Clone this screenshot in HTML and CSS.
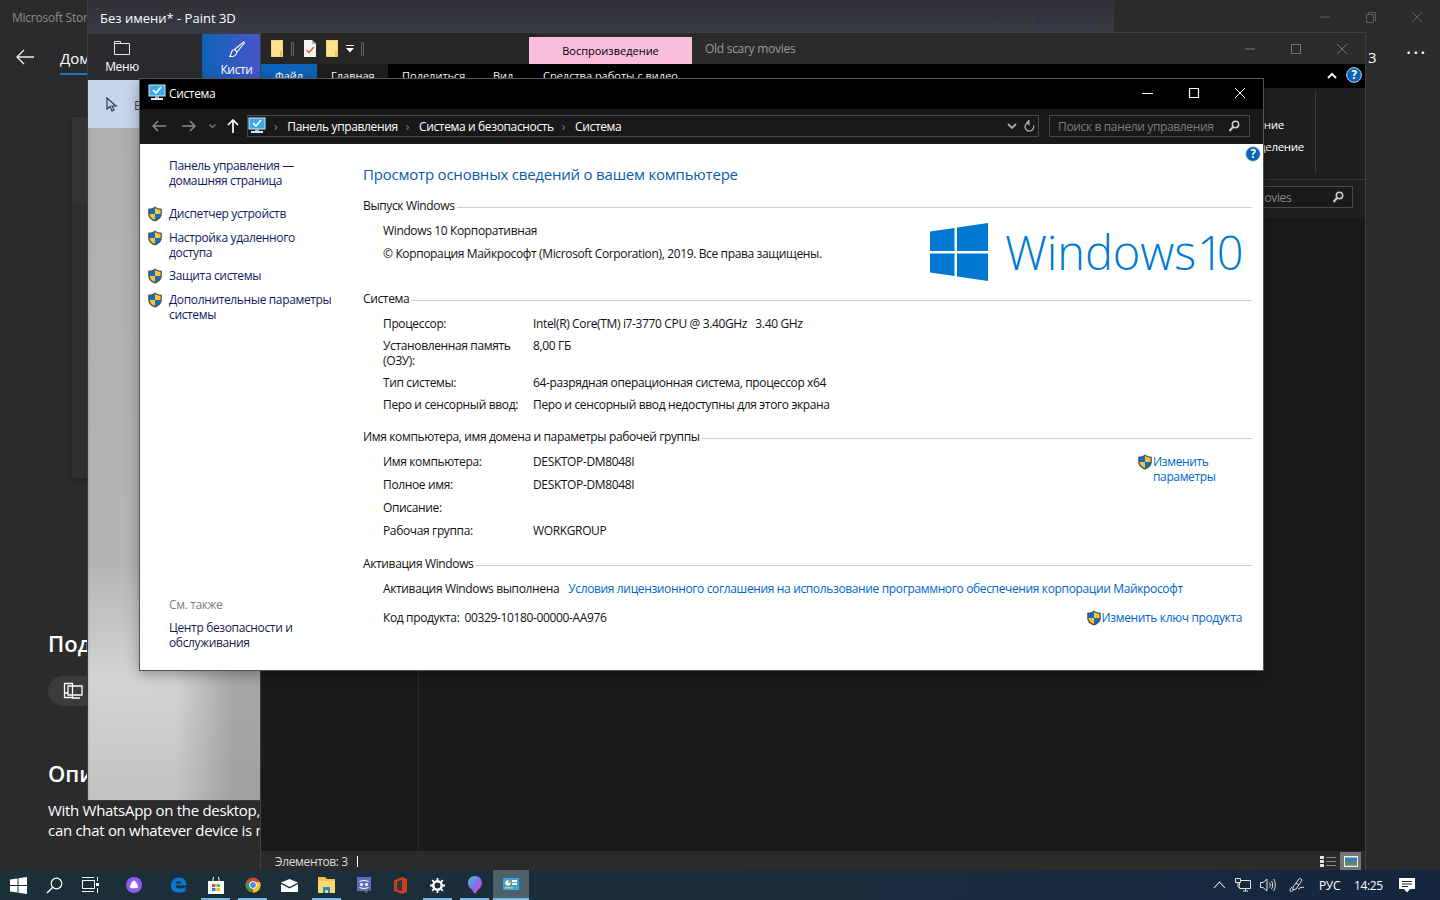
FILE: index.html
```html
<!DOCTYPE html>
<html lang="ru">
<head>
<meta charset="utf-8">
<title>Система</title>
<link rel="stylesheet" href="styles.css">
</head>
<body>
<svg class="defs" width="0" height="0">
  <symbol id="shield" viewBox="0 0 16 16">
    <path d="M8 .5C6 2 4 2.600 1.200 2.800V8c0 3.400 2.600 5.800 6.800 7.600 4.200-1.800 6.800-4.200 6.800-7.600V2.800C12 2.600 10 2 8 .5z" fill="#4f5358"/>
    <path d="M8 2C6.400 3 4.600 3.600 2.500 3.900V8H8z" fill="#0f6fc6"/>
    <path d="M8 2c1.600 1 3.400 1.600 5.500 1.900V8H8z" fill="#fdc32e"/>
    <path d="M2.500 8H8v6.100C4.800 12.700 2.500 10.800 2.500 8z" fill="#fdc32e"/>
    <path d="M13.500 8H8v6.100c3.200-1.400 5.500-3.300 5.500-6.100z" fill="#0f6fc6"/>
  </symbol>
  <symbol id="pc" viewBox="0 0 18 18">
    <rect x="1" y="1" width="16" height="11" fill="#3aa9ea" stroke="#cfe8f7" stroke-width="1"/>
    <path d="M5 6l3 3 5-6" fill="none" stroke="#fff" stroke-width="1.600"/>
    <rect x="7" y="12" width="4" height="2" fill="#9fb3c0"/>
    <rect x="3" y="14" width="12" height="2" fill="#dfe6ea"/>
  </symbol>
  <symbol id="lens" viewBox="0 0 12 12">
    <circle cx="7.500" cy="4.500" r="3.200" fill="none" stroke="currentColor" stroke-width="1.500"/>
    <path d="M5 7l-3.500 4" stroke="currentColor" stroke-width="2" fill="none"/>
  </symbol>
  <symbol id="help" viewBox="0 0 18 18">
    <circle cx="9" cy="9" r="8.300" fill="#0b63b8" stroke="#d7e6f3" stroke-width="1"/>
    <text x="9" y="14" text-anchor="middle" class="helpmark">?</text>
  </symbol>
  <symbol id="qfolder" viewBox="0 0 12 17">
    <path d="M0 0h12v17H0z" fill="#fbe28f"/>
    <path d="M9 11h3v6H9z" fill="#e7c04f"/>
    <path d="M.5 .5h11v16H.5z" fill="none" stroke="#f2d26c"/>
  </symbol>
</svg>

<div class="desktop">

  <section class="store">
    <div class="store-head">
      <div class="store-title">
        <span class="store-name">Microsoft Store</span>
        <div class="store-ctrl">
          <svg width="12" height="12" viewBox="0 0 12 12"><path d="M1 6h10" stroke="#5f5f5f"/></svg>
          <svg width="12" height="12" viewBox="0 0 12 12"><path d="M1.500 3.500h7v8h-7zM3.500 3.500v-2h7v8h-2" fill="none" stroke="#5f5f5f"/></svg>
          <svg width="12" height="12" viewBox="0 0 12 12"><path d="M1 1l10 10M11 1L1 11" stroke="#5f5f5f"/></svg>
        </div>
      </div>
      <div class="store-nav">
        <svg width="20" height="18" viewBox="0 0 20 18"><path d="M9 2L2 9l7 7M2 9h17" fill="none" stroke="#ececec" stroke-width="1.400"/></svg>
        <span class="store-home">Домой</span>
        <span class="store-count">: 3</span>
        <span class="store-more">•••</span>
      </div>
    </div>
    <div class="store-body">
      <div class="store-card"></div>
      <h2 class="store-h">Поддерживается на</h2>
      <div class="store-pill">
        <svg width="22" height="18" viewBox="0 0 22 18"><path d="M1.500 1.500h8v14h-8zM5 4h14v9H5zM9 16h8M1.500 11h4" fill="none" stroke="#fff" stroke-width="1.300"/></svg>
      </div>
      <h2 class="store-h store-h2">Описание</h2>
      <p class="store-text">With WhatsApp on the desktop, your conversations<br>can chat on whatever device is most convenient</p>
    </div>
  </section>

  <section class="paint">
    <div class="paint-title">
      <span>Без имени* - Paint 3D</span>
      <div class="paint-ctrl">
        <svg width="12" height="12" viewBox="0 0 12 12"><path d="M1 6h10" stroke="#2a2f57"/></svg>
        <svg width="12" height="12" viewBox="0 0 12 12"><path d="M1.500 .5h9v11h-9z" fill="none" stroke="#2a2f57"/></svg>
        <svg width="12" height="12" viewBox="0 0 12 12"><path d="M1 1l10 10M11 1L1 11" stroke="#2a2f57"/></svg>
      </div>
    </div>
    <div class="paint-tools">
      <div class="paint-menu">
        <svg width="18" height="14" viewBox="0 0 18 14"><path d="M1.500 2.500h15v11h-15zM1.500 2.500V.5h6v2" fill="none" stroke="#e8e8e8"/></svg>
        <span>Меню</span>
      </div>
      <div class="paint-brush">
        <svg width="16" height="17" viewBox="0 0 16 17"><path d="M14.500 1c.8 0 1 .8.500 1.500L8 11l-2.500-2.500z M5.500 8.500L8 11c-.5 2.500-2 4-4 4.500H.5c1.500-1 1.500-3 2-4.500.5-1.500 1.500-2.500 3-2.500z" fill="none" stroke="#fff" stroke-width="1.100"/></svg>
        <span>Кисти</span>
      </div>
    </div>
    <div class="paint-side">
      <svg width="14" height="16" viewBox="0 0 14 16"><path d="M2 1v11l3-2.500 2 4.500 2-1-2-4h4z" fill="#c3d4e8" stroke="#38385a" stroke-width="1.200"/></svg>
      <span class="paint-select">Выбрать</span>
    </div>
    <div class="paint-canvas"></div>
  </section>

  <section class="explorer">
    <div class="ex-title">
      <div class="ex-qa">
        <svg width="12" height="17"><use href="#qfolder"/></svg>
        <i class="ex-sep"></i>
        <svg class="ex-doc" width="12" height="17" viewBox="0 0 12 17"><path d="M0 0h8l4 4v13H0z" fill="#f3f3f3"/><path d="M8 0v4h4" fill="#b5b5b5"/><path d="M2.500 10l2.500 2.500L10 7" fill="none" stroke="#e2562a" stroke-width="1.300"/></svg>
        <svg width="12" height="17"><use href="#qfolder"/></svg>
        <svg class="ex-drop" width="8" height="8" viewBox="0 0 8 8"><path d="M0 .5h8" stroke="#fff"/><path d="M0 3h8L4 7.500z" fill="#fff"/></svg>
        <i class="ex-sep"></i>
      </div>
      <div class="ex-pink">Воспроизведение</div>
      <div class="ex-name">Old scary movies</div>
      <div class="ex-ctrl">
        <svg width="12" height="12" viewBox="0 0 12 12"><path d="M1 6h10" stroke="#777"/></svg>
        <svg width="12" height="12" viewBox="0 0 12 12"><path d="M1.500 1.500h9v9h-9z" fill="none" stroke="#777"/></svg>
        <svg width="12" height="12" viewBox="0 0 12 12"><path d="M1 1l10 10M11 1L1 11" stroke="#777"/></svg>
      </div>
    </div>
    <div class="ex-tabs">
      <span class="ex-tab ex-file">Файл</span>
      <span class="ex-tab ex-main">Главная</span>
      <span class="ex-tab ex-share">Поделиться</span>
      <span class="ex-tab ex-view">Вид</span>
      <span class="ex-tab ex-video">Средства работы с видео</span>
      <svg class="ex-up" width="10" height="7" viewBox="0 0 10 7"><path d="M1 6l4-4 4 4" fill="none" stroke="#eee" stroke-width="2"/></svg>
      <svg class="ex-help" width="16" height="16"><use href="#help"/></svg>
    </div>
    <div class="ex-ribbon">
      <div class="ex-group">
        <span>Снять выделение</span>
        <span>Обратить выделение</span>
      </div>
      <i class="ex-vline"></i>
    </div>
    <div class="ex-addr">
      <div class="ex-search">
        <span>Поиск: Old scary movies</span>
        <svg width="12" height="12"><use href="#lens"/></svg>
      </div>
    </div>
    <div class="ex-main-area">
      <div class="ex-nav"></div>
      <div class="ex-list"></div>
    </div>
    <div class="ex-status">
      <span>Элементов: 3</span>
      <i class="ex-caret"></i>
      <div class="ex-views">
        <svg width="18" height="13" viewBox="0 0 18 13"><path d="M1 1h4v3H1zM1 5h4v3H1zM1 9h4v3H1z" fill="#e4e4e4"/><path d="M7 2.500h10M7 6.500h10M7 10.500h10" stroke="#8a8a8a"/></svg>
        <span class="ex-viewon"><svg width="14" height="11" viewBox="0 0 14 11"><rect width="14" height="11" fill="#eee"/><rect x="1" y="1.500" width="12" height="8" fill="#3a7fb0"/><rect x="1" y="6" width="12" height="3.500" fill="#5f8a6a"/></svg></span>
      </div>
    </div>
  </section>

  <section class="sys">
    <header class="sys-title">
      <svg width="18" height="18"><use href="#pc"/></svg>
      <span>Система</span>
      <div class="sys-ctrl">
        <svg width="12" height="12" viewBox="0 0 12 12"><path d="M0 6.500h11" stroke="#fff"/></svg>
        <svg width="12" height="12" viewBox="0 0 12 12"><path d="M1.500 1.500h9v9h-9z" fill="none" stroke="#fff" stroke-width="1.200"/></svg>
        <svg width="12" height="12" viewBox="0 0 12 12"><path d="M1 1l10 10M11 1L1 11" stroke="#fff"/></svg>
      </div>
    </header>
    <div class="sys-addr">
      <div class="sys-nav">
        <svg width="14" height="12" viewBox="0 0 14 12"><path d="M6 1L1 6l5 5M1 6h13" fill="none" stroke="#8a8a8a" stroke-width="1.500"/></svg>
        <svg width="14" height="12" viewBox="0 0 14 12"><path d="M8 1l5 5-5 5M13 6H0" fill="none" stroke="#8a8a8a" stroke-width="1.500"/></svg>
        <svg width="7" height="5" viewBox="0 0 7 5"><path d="M.5 .5l3 3 3-3" fill="none" stroke="#777" stroke-width="1.300"/></svg>
        <svg width="12" height="14" viewBox="0 0 12 14"><path d="M1 6l5-5 5 5M6 1v13" fill="none" stroke="#fff" stroke-width="1.700"/></svg>
      </div>
      <div class="sys-path">
        <svg class="path-pc" width="18" height="18"><use href="#pc"/></svg>
        <span class="crumb-sep">›</span><span>Панель управления</span>
        <span class="crumb-sep">›</span><span>Система и безопасность</span>
        <span class="crumb-sep">›</span><span>Система</span>
        <svg class="path-drop" width="10" height="7" viewBox="0 0 10 7"><path d="M1 1l4 4 4-4" fill="none" stroke="#aaa" stroke-width="1.800"/></svg>
        <svg width="11" height="13" viewBox="0 0 11 13"><path d="M5 2.500a4.300 4.300 0 1 0 4.500 3M5 .5v4l-2-2z" fill="none" stroke="#aaa" stroke-width="1.300"/></svg>
      </div>
      <div class="sys-search">
        <span>Поиск в панели управления</span>
        <svg width="12" height="12"><use href="#lens"/></svg>
      </div>
    </div>
    <div class="sys-body">
      <svg class="sys-help" width="16" height="16"><use href="#help"/></svg>
      <aside class="side">
        <a class="side-home">Панель управления —<br>домашняя страница</a>
        <ul class="side-list">
          <li><svg width="16" height="16"><use href="#shield"/></svg><a>Диспетчер устройств</a></li>
          <li><svg width="16" height="16"><use href="#shield"/></svg><a>Настройка удаленного<br>доступа</a></li>
          <li><svg width="16" height="16"><use href="#shield"/></svg><a>Защита системы</a></li>
          <li><svg width="16" height="16"><use href="#shield"/></svg><a>Дополнительные параметры<br>системы</a></li>
        </ul>
        <div class="side-also">
          <span class="side-also-h">См. также</span>
          <a>Центр безопасности и<br>обслуживания</a>
        </div>
      </aside>
      <main class="info">
        <h1 class="info-h">Просмотр основных сведений о вашем компьютере</h1>

        <h2 class="sec"><span>Выпуск Windows</span></h2>
        <div class="edition">
          <div class="edition-text">
            <p>Windows 10 Корпоративная</p>
            <p>© Корпорация Майкрософт (Microsoft Corporation), 2019. Все права защищены.</p>
          </div>
          <div class="logo">
            <svg width="58" height="58" viewBox="0 0 58 58"><path d="M0 8.500L24.500 5v23H0zM27 4.600L58 0v28H27zM0 30.500h24.500V53L0 49.500zM27 30.500h31V58l-31-4.600z" fill="#0078d4"/></svg>
            <span class="logo-word">Windows</span><span class="logo-ten">10</span>
          </div>
        </div>

        <h2 class="sec sec-sys"><span>Система</span></h2>
        <dl class="rows rows-sys">
          <dt>Процессор:</dt><dd>Intel(R) Core(TM) i7-3770 CPU @ 3.40GHz   3.40 GHz</dd>
          <dt>Установленная память (ОЗУ):</dt><dd>8,00 ГБ</dd>
          <dt>Тип системы:</dt><dd>64-разрядная операционная система, процессор x64</dd>
          <dt>Перо и сенсорный ввод:</dt><dd>Перо и сенсорный ввод недоступны для этого экрана</dd>
        </dl>

        <h2 class="sec sec-name"><span>Имя компьютера, имя домена и параметры рабочей группы</span></h2>
        <div class="names">
          <dl class="rows rows-name">
            <dt>Имя компьютера:</dt><dd>DESKTOP-DM8048I</dd>
            <dt>Полное имя:</dt><dd>DESKTOP-DM8048I</dd>
            <dt>Описание:</dt><dd></dd>
            <dt>Рабочая группа:</dt><dd>WORKGROUP</dd>
          </dl>
          <a class="change"><svg width="16" height="16"><use href="#shield"/></svg><span>Изменить<br>параметры</span></a>
        </div>

        <h2 class="sec sec-act"><span>Активация Windows</span></h2>
        <div class="activ">
          <span>Активация Windows выполнена</span>
          <a>Условия лицензионного соглашения на использование программного обеспечения корпорации Майкрософт</a>
        </div>
        <div class="key">
          <span>Код продукта:</span>
          <span>00329-10180-00000-AA976</span>
          <a class="change change-key"><svg width="16" height="16"><use href="#shield"/></svg><span>Изменить ключ продукта</span></a>
        </div>
      </main>
    </div>
  </section>
</div>

<footer class="taskbar">
  <div class="tb-cell"><svg width="17" height="17" viewBox="0 0 17 17"><path d="M0 2.500L7.500 1.400V8H0zM8.500 1.300L17 0v8H8.500zM0 9h7.500v6.600L0 14.500zM8.500 9H17v8l-8.500-1.300z" fill="#fff"/></svg></div>
  <div class="tb-cell"><svg width="17" height="17" viewBox="0 0 17 17"><circle cx="10.500" cy="6.500" r="5.300" fill="none" stroke="#fff" stroke-width="1.200"/><path d="M6.500 10.500L1 16" stroke="#fff" stroke-width="1.400"/></svg></div>
  <div class="tb-cell"><svg width="17" height="16" viewBox="0 0 17 16"><path d="M.5 3.500h12v8H.5zM0 .5h12M0 14.500h12" fill="none" stroke="#fff"/><path d="M14 6h3v3h-3z" fill="#fff"/><path d="M15.500 0v4M15.500 11v5" stroke="#fff"/></svg></div>
  <div class="tb-cell tb-alice"><svg width="16" height="16" viewBox="0 0 16 16"><circle cx="8" cy="8" r="8" fill="#8c5cf0"/><path d="M8 3.500c1.500 0 4 4.500 4 6.500 0 1.500-2.500 1.300-4 1.300S4 11.500 4 10c0-2 2.500-6.500 4-6.500z" fill="#fff"/></svg></div>
  <div class="tb-cell"><svg width="17" height="17" viewBox="0 0 17 17"><path d="M1 9c0-5 3-8.500 8-8.500 4.500 0 7.500 3 7.500 8H5.500c.3 3.500 5.500 4 10 1.500v4.300c-6 2.700-14.500 1.500-14.500-5.300zM5.500 6.500h6c0-3-5.500-3-6 0z" fill="#0a78d4"/></svg></div>
  <div class="tb-cell tb-run"><svg width="16" height="17" viewBox="0 0 16 17"><path d="M0 4h16v13H0z" fill="#fff"/><path d="M5 4V2a3 3 0 0 1 6 0v2" fill="none" stroke="#fff"/><path d="M4 7h3.500v3H4z" fill="#e74c1e"/><path d="M8.500 7H12v3H8.500z" fill="#6cb33f"/><path d="M4 11h3.500v3H4z" fill="#1a8ad4"/><path d="M8.500 11H12v3H8.500z" fill="#f5b51d"/></svg></div>
  <div class="tb-cell tb-run"><svg width="16" height="16" viewBox="0 0 16 16"><circle cx="8" cy="8" r="7.500" fill="#d9412f"/><path d="M8 8L1.500 4.300A7.500 7.500 0 0 0 6 15.200z" fill="#3a9a49"/><path d="M8 8v7.500A7.500 7.500 0 0 0 15 5H8z" fill="#f3c22c"/><circle cx="8" cy="8" r="3.500" fill="#4a8ff0" stroke="#fff"/></svg></div>
  <div class="tb-cell"><svg width="17" height="13" viewBox="0 0 17 13"><path d="M0 3.500L8.500 0 17 3.500 8.500 8z" fill="#fff"/><path d="M0 5l8.500 4.500L17 5v8H0z" fill="#fff"/></svg></div>
  <div class="tb-cell tb-run"><svg width="17" height="16" viewBox="0 0 17 16"><path d="M0 0h7l2 2h8v3H0z" fill="#f5c542"/><path d="M0 4h17v12H0z" fill="#f7d76e"/><path d="M5 10h7v6h-2v-3H7v3H5z" fill="#1f86d0"/></svg></div>
  <div class="tb-cell"><svg width="16" height="17" viewBox="0 0 16 17"><path d="M1 0h14v14l-3-1-1 3-3-2H1z" fill="#5f6fb5"/><circle cx="5.500" cy="7.500" r="1.500" fill="#fff"/><circle cx="10.500" cy="7.500" r="1.500" fill="#fff"/><path d="M3.500 4.500c3-1.300 6-1.300 9 0M3.500 10.500c3 1.300 6 1.300 9 0" fill="none" stroke="#fff"/></svg></div>
  <div class="tb-cell"><svg width="13" height="17" viewBox="0 0 13 17"><path d="M0 3.500L8 0l5 2v13l-5 2-8-3z" fill="#d13a1e"/><path d="M3 4.500L8 3v11l-5-1z" fill="#2a3a42"/></svg></div>
  <div class="tb-cell tb-run"><svg width="15" height="15" viewBox="0 0 15 15"><circle cx="7.500" cy="7.500" r="4.200" fill="none" stroke="#fff" stroke-width="2.400"/><path d="M7.500 0v3M7.500 12v3M0 7.500h3M12 7.500h3M2.200 2.200l2.100 2.100M10.700 10.700l2.100 2.100M2.200 12.800l2.100-2.100M10.700 4.300l2.100-2.100" stroke="#fff" stroke-width="1.800"/></svg></div>
  <div class="tb-cell tb-run"><svg width="14" height="18" viewBox="0 0 14 18"><defs><linearGradient id="drop" x1="0" y1="0" x2="1" y2="1"><stop offset="0" stop-color="#3ad0d8"/><stop offset=".5" stop-color="#8a6cf0"/><stop offset="1" stop-color="#f04fa8"/></linearGradient></defs><path d="M7 0c4 0 7 3 7 7 0 3-2 5-4 7l-3 4-3-4c-2-2-4-4-4-7 0-4 3-7 7-7z" fill="url(#drop)"/></svg></div>
  <div class="tb-cell tb-active"><svg width="16" height="14" viewBox="0 0 16 14"><rect width="16" height="12" fill="#35a4e6"/><circle cx="5" cy="5" r="2.700" fill="#fff"/><path d="M5 5V2.300A2.700 2.700 0 0 1 7.700 5z" fill="#f59b23"/><rect x="9" y="2" width="5" height="2" fill="#fff"/><rect x="9" y="5" width="5" height="2" fill="#fff"/><rect x="2" y="9" width="8" height="1.500" fill="#f5c542"/></svg></div>
  <div class="tray">
    <svg class="tray-ic" width="13" height="8" viewBox="0 0 13 8"><path d="M1 7l5.500-6L12 7" fill="none" stroke="#e4e4e4" stroke-width="1.100"/></svg>
    <svg class="tray-ic" width="16" height="14" viewBox="0 0 16 14"><path d="M4.500 2.500h11v8h-11zM8 13h5M10.500 10.500V13" fill="none" stroke="#e4e4e4"/><path d="M.5 .5h5v4h-5zM3 4.500V9h2" fill="#1b2d3c" stroke="#e4e4e4"/></svg>
    <svg class="tray-ic tray-vol" width="16" height="14" viewBox="0 0 16 14"><path d="M.5 4.500h2.500L7 1v12L3 9.500H.5zM9.500 4.500c1 1.500 1 3.500 0 5M11.500 3c1.600 2.400 1.600 5.600 0 8M13.500 1c2.400 3.600 2.400 8.400 0 12" fill="none" stroke="#e4e4e4"/></svg>
    <svg class="tray-ic tray-pen" width="16" height="16" viewBox="0 0 16 16"><path d="M4 10l6-8c1-1.300 3.500.3 2.500 2L7 12l-3 1zM7 6l3 2M4.500 13C3 14 1.500 15 1 14c-.5-1 1-3 2-4M9 12c2-1 4-2.500 6-1.500" fill="none" stroke="#e4e4e4"/></svg>
    <span class="tray-lang">РУС</span>
    <span class="tray-time">14:25</span>
    <svg class="tray-note" width="16" height="15" viewBox="0 0 16 15"><path d="M0 0h16v11h-5l-3 3.500L5 11H0z" fill="#fff"/><path d="M3 3.500h10M3 6h10M3 8.500h6" stroke="#1a2b40"/></svg>
  </div>
</footer>
</body>
</html>
```
FILE: styles.css
```css
* { box-sizing: border-box; }
html, body { margin: 0; padding: 0; }
body {
  width: 1440px;
  height: 900px;
  overflow: hidden;
  background: #2b2b2b;
  font-family: "Open Sans", "Noto Sans", sans-serif;
  font-size: 12px;
  letter-spacing: -.36px;
  color: #000;
}
.defs { position: absolute; }
.helpmark { font: 700 13px "Open Sans", sans-serif; fill: #fff; }
svg { display: block; flex: none; }
a { color: inherit; }
p, h1, h2, dl, dd, dt, ul { margin: 0; padding: 0; }
li { list-style: none; }

.desktop { position: relative; width: 1440px; height: 870px; overflow: hidden; }

/* Store window */
.store { position: absolute; left: 0; top: 0; width: 1440px; height: 870px; background: #2b2b2b; color: #fff; }
.store-head { height: 80px; background: #2b2b2b; }
.store-title { display: flex; align-items: center; height: 34px; padding-left: 12px; }
.store-name { color: #8d8d8d; letter-spacing: -.25px; }
.store-ctrl { display: flex; gap: 34px; margin-left: auto; padding-right: 17px; }
.store-nav { display: flex; align-items: center; height: 46px; padding: 0 12px 0 15px; }
.store-home { margin-left: 25px; font-size: 15px; letter-spacing: 0; border-bottom: 2px solid #0f78d4; padding: 4px 0 5px; margin-top: 4px; }
.store-count { margin-left: auto; margin-right: 30px; font-size: 15px; letter-spacing: 0; }
.store-more { font-size: 11px; letter-spacing: 3px; margin-top: -9px; }
.store-body { position: relative; padding: 548px 0 0 48px; }
.store-card { position: absolute; left: 72px; top: 37px; width: 60px; height: 361px; background: linear-gradient(#333 0, #333 85px, #2f2f2f 85px); box-shadow: 0 3px 10px rgba(0,0,0,.25); }
.store-h { position: relative; font-size: 22px; font-weight: 600; letter-spacing: 0; line-height: 30px; }
.store-pill { display: flex; align-items: center; width: 120px; height: 30px; margin-top: 18px; padding-left: 15px; border-radius: 15px; background: #3b3b3b; }
.store-h2 { margin-top: 52px; }
.store-text { margin: 12px 0 0; font-size: 15px; letter-spacing: -.3px; line-height: 20px; white-space: nowrap; }

/* Paint 3D window */
.paint { position: absolute; left: 88px; top: 0; width: 1025px; height: 800px; background: #33363f; color: #fff; box-shadow: 0 0 0 1px #3a3a3a; }
.paint-title { display: flex; align-items: center; height: 33px; padding: 2px 18px 0 12px; font-size: 13px; letter-spacing: 0; background: linear-gradient(#2f3136, #383b45); }
.paint-ctrl { display: flex; gap: 34px; margin-left: auto; }
.paint-tools { display: flex; height: 47px; background: #2b2b2f; border-top: 1px solid #3b3b3b; }
.paint-menu { display: flex; flex-direction: column; align-items: center; gap: 3px; width: 68px; padding-top: 7px; }
.paint-brush { display: flex; flex-direction: column; align-items: center; gap: 3px; width: 59px; margin-left: 46px; padding: 7px 0 0 10px; background: linear-gradient(90deg, #0e63b6, #4a55c8); }
.paint-side { display: flex; gap: 15px; height: 48px; width: 173px; padding: 17px 0 0 17px; background: #c5d6ea; color: #38385a; }
.paint-select { font-size: 12px; letter-spacing: 0; }
.paint-canvas {
  width: 173px;
  height: 672px;
  background:
    linear-gradient(90deg, rgba(0,0,0,.08) 0, transparent 3px, transparent 50%, rgba(130,130,130,.55) 85%),
    linear-gradient(#aeb0ae 0, #b4b6b4 65%, #d3d5d2 82%, #c2c4c2 100%);
}

/* Explorer window */
.explorer { position: absolute; left: 261px; top: 33px; width: 1104px; height: 837px; display: flex; flex-direction: column; background: #1a1a1a; color: #fff; box-shadow: 0 0 0 1px #3f3f3f; }
.ex-title { display: flex; align-items: center; height: 31px; background: linear-gradient(90deg, #262626 0, #262626 25%, #2b2b2b 25%); }
.ex-qa { display: flex; align-items: center; width: 268px; padding-left: 10px; }
.ex-sep { display: block; width: 3px; height: 14px; margin: 0 10px 0 8px; border: 1px solid #666; border-radius: 1px; }
.ex-doc { margin-right: 10px; }
.ex-drop { margin-left: 8px; margin-right: -1px; }
.ex-pink { display: flex; align-items: center; justify-content: center; align-self: flex-end; width: 163px; height: 27px; color: #000; background: #f9bed9; font-size: 11px; letter-spacing: 0; }
.ex-name { margin-left: 13px; color: #9a9a9a; letter-spacing: -.28px; }
.ex-ctrl { display: flex; gap: 34px; margin-left: auto; padding-right: 17px; }
.ex-tabs { display: flex; align-items: flex-start; flex: none; height: 24px; background: #000; }
.ex-tab { height: 24px; padding-top: 4px; font-size: 11px; letter-spacing: 0; }
.ex-file { width: 56px; text-align: center; background: #0e62b8; }
.ex-main { width: 71px; padding-left: 14px; background: #1f1f1f; }
.ex-share { width: 105px; padding-left: 14px; }
.ex-view { width: 50px; }
.ex-video { width: 200px; }
.ex-up { margin: 8px 9px 0 auto; }
.ex-help { margin: 3px 3px 0 0; }
.ex-ribbon { display: flex; justify-content: flex-end; height: 92px; background: #1f1f1f; padding: 2px 49px 5px 0; gap: 11px; border-bottom: 1px solid #333; }
.ex-group { display: flex; flex-direction: column; align-items: flex-start; gap: 7px; padding-top: 27px; font-size: 11.500px; letter-spacing: -.3px; }
.ex-vline { display: block; width: 1px; background: #3a3a3a; }
.ex-addr { display: flex; justify-content: flex-end; align-items: flex-start; height: 38px; background: #1f1f1f; padding: 6px 12px 0 0; }
.ex-search { display: flex; align-items: center; justify-content: space-between; width: 200px; height: 22px; padding: 0 8px 0 9px; color: #8a8a8a; border: 1px solid #4a4a4a; background: #1a1a1a; }
.ex-search svg { color: #cfcfcf; }
.ex-main-area { display: flex; flex: 1; background: #1a1a1a; }
.ex-nav { width: 158px; border-right: 1px solid #2b2b2b; }
.ex-status { display: flex; align-items: center; height: 19px; padding: 1px 0 0 14px; background: #2b2b2b; color: #ddd; }
.ex-caret { display: block; width: 1px; height: 11px; margin-left: 9px; background: #fff; }
.ex-views { display: flex; align-items: center; gap: 3px; margin-left: auto; padding-right: 4px; }
.ex-viewon { display: flex; align-items: center; justify-content: center; width: 21px; height: 19px; background: #777; }

/* System window */
.sys { position: absolute; left: 140px; top: 79px; width: 1123px; height: 591px; display: flex; flex-direction: column; background: #fff; box-shadow: 0 0 0 1px #555, 0 4px 14px rgba(0,0,0,.35); }
.sys-title { display: flex; align-items: center; gap: 3px; flex: none; height: 30px; padding: 0 0 2px 8px; background: #000; color: #fff; }
.sys-ctrl { display: flex; gap: 34px; margin-left: auto; padding-right: 17px; }
.sys-addr { display: flex; align-items: center; flex: none; height: 35px; padding-bottom: 1px; background: #191919; color: #fff; }
.sys-nav { display: flex; align-items: center; width: 107px; padding-left: 12px; }
.sys-nav svg:nth-child(2) { margin-left: 16px; }
.sys-nav svg:nth-child(3) { margin-left: 13px; }
.sys-nav svg:nth-child(4) { margin-left: 11px; }
.sys-path { display: flex; align-items: center; gap: 6px; width: 792px; height: 22px; padding: 0 3px 0 1px; border: 1px solid #4a4a4a; }
.path-pc { margin-left: -1px; }
.crumb-sep { color: #888; margin: 0 4px 0 2px; }
.path-drop { margin-left: auto; margin-right: 1px; }
.sys-search { display: flex; align-items: center; justify-content: space-between; width: 201px; height: 22px; margin-left: 10px; padding: 0 9px 0 8px; border: 1px solid #4a4a4a; color: #7d7d7d; }
.sys-search svg { color: #cfcfcf; }
.sys-body { position: relative; display: flex; flex: 1; min-height: 0; }
.sys-help { position: absolute; right: 2px; top: 2px; }

.side { display: flex; flex-direction: column; width: 223px; padding: 14px 0 0 29px; color: #0d1a63; line-height: 15px; }
.side-list { display: flex; flex-direction: column; gap: 8px; margin: 18px 0 0 -22px; }
.side-list li { display: flex; gap: 6px; }
.side-also { display: flex; flex-direction: column; gap: 8px; margin-top: auto; padding-bottom: 20px; color: #111a4f; }
.side-also-h { color: #7d7d7d; }

.info { flex: 1; min-width: 0; padding: 19px 11px 0 0; line-height: 15px; color: #111; }
.info-h { font-size: 15px; font-weight: 400; line-height: 22px; letter-spacing: -.21px; color: #0b5ab0; }
.sec { display: flex; align-items: center; gap: 2px; font-size: 12px; font-weight: 400; margin-top: 13px; }
.sec::after { content: ""; flex: 1; height: 1px; background: #cfcfcf; margin-top: 3px; }
.edition { display: flex; position: relative; height: 78px; padding-left: 20px; }
.edition-text { display: flex; flex-direction: column; gap: 8px; padding-top: 10px; }
.logo { position: absolute; left: 567px; top: 10px; display: flex; align-items: center; color: #0078d4; font-weight: 300; font-size: 47px; line-height: 58px; letter-spacing: -.1px; }
.logo svg { margin-right: 17px; }
.logo-ten { margin-left: 1px; letter-spacing: -7px; }
.sec-sys { margin-top: 0; }
.rows { display: grid; grid-template-columns: 150px 1fr; padding-left: 20px; }
.rows dd { white-space: pre; }
.rows-sys { row-gap: 7px; margin-top: 10px; }
.rows-sys dt:nth-of-type(2) { width: 140px; }
.rows-name { row-gap: 8px; margin-top: 10px; flex: 1; }
.names { display: flex; align-items: flex-start; }
.change { display: flex; color: #0066cc; }
.names .change { width: 115px; margin-top: 10px; }
.sec-name { margin-top: 17px; }
.sec-act { margin-top: 18px; }
.activ { display: flex; gap: 9px; padding-left: 20px; margin-top: 10px; }
.activ a { color: #0066cc; }
.key { display: flex; gap: 5px; padding: 0 0 0 20px; margin-top: 14px; }
.change-key { margin-left: auto; margin-right: 10px; }

/* Taskbar */
.taskbar { display: flex; align-items: stretch; height: 30px; background: linear-gradient(90deg, #1c3038, #1a2b3c 60%, #14263f); color: #fff; }
.tb-cell { position: relative; display: flex; align-items: center; justify-content: center; width: 36px; }
.tb-cell:nth-child(n+5) { width: 37px; }
.tb-alice { width: 52px; }
.tb-run::after { content: ""; position: absolute; left: 4px; right: 4px; bottom: 0; height: 2px; background: #76b9ed; }
.tb-cell.tb-active { background: #4f6168; width: 36px; }
.tb-active::after { content: ""; position: absolute; left: 0; right: 0; bottom: 0; height: 2px; background: #76b9ed; }
.tray { display: flex; align-items: center; margin-left: auto; }
.tray-ic { margin-right: 9px; }
.tray-vol { margin-right: 13px; }
.tray-pen { margin-right: 0; }
.tray-lang { margin-left: 14px; width: 27px; }
.tray-time { margin-left: 8px; width: 30px; }
.tray-note { margin: 0 25px 0 15px; }
```
